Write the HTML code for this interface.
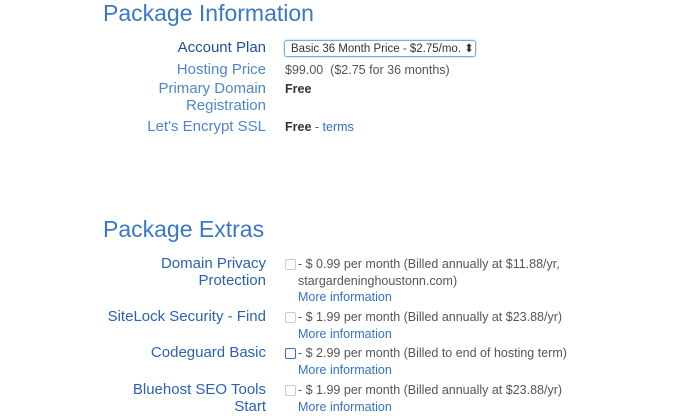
<!DOCTYPE html>
<html><head><style>
body{margin:0;width:700px;height:416px;background:#fff;font-family:"Liberation Sans",sans-serif;position:relative;overflow:hidden}
div{position:absolute;white-space:nowrap}
.h{left:103px;font-size:23px;color:#3a78c3}
.l{right:434px;font-size:15px;color:#2b62ae;text-align:right}
.lp{color:#4f86cc}
.v{left:285px;font-size:12.5px;color:#555}
.b{color:#333;font-weight:bold}
.a{color:#2f6fc0}
.m{left:298px;font-size:12.5px;color:#3573c4}
.cb{left:285px;width:9px;height:9px;border:1px solid #ccc;border-radius:2px}
.t{left:298px;font-size:12.5px;color:#555}
</style></head><body>
<div class="h" style="top:0px">Package Information</div>
<div class="l" style="top:39px;color:#1d4f96">Account Plan</div>
<div style="left:284px;top:40px;width:192px;height:17px;border:1px solid #7fa8dd;border-radius:3px;box-shadow:0 0 2px #9cc0ec;font-size:11.5px;color:#333;line-height:17px;padding-left:6px;box-sizing:border-box">Basic 36 Month Price - $2.75/mo. ⬍</div>
<div class="l lp" style="top:61px">Hosting Price</div>
<div class="v" style="top:63px">$99.00&nbsp; ($2.75 for 36 months)</div>
<div class="l lp" style="top:80px">Primary Domain</div>
<div class="v b" style="top:82px">Free</div>
<div class="l lp" style="top:97px">Registration</div>
<div class="l lp" style="top:118px">Let's Encrypt SSL</div>
<div class="v" style="top:120px"><span class="b">Free</span> - <span class="a">terms</span></div>

<div class="h" style="top:216px">Package Extras</div>
<div class="l" style="top:255px">Domain Privacy</div>
<div class="l" style="top:272px">Protection</div>
<div class="cb" style="top:259px"></div>
<div class="t" style="top:257px">- $ 0.99 per month (Billed annually at $11.88/yr,</div>
<div class="t" style="top:274px">stargardeninghoustonn.com)</div>
<div class="m" style="top:290px">More information</div>
<div class="l" style="top:308px">SiteLock Security - Find</div>
<div class="cb" style="top:312px"></div>
<div class="t" style="top:310px">- $ 1.99 per month (Billed annually at $23.88/yr)</div>
<div class="m" style="top:327px">More information</div>
<div class="l" style="top:344px">Codeguard Basic</div>
<div class="cb" style="top:348px;border-color:#3d6fc0"></div>
<div class="t" style="top:346px">- $ 2.99 per month (Billed to end of hosting term)</div>
<div class="m" style="top:363px">More information</div>
<div class="l" style="top:381px">Bluehost SEO Tools</div>
<div class="l" style="top:398px">Start</div>
<div class="cb" style="top:385px"></div>
<div class="t" style="top:383px">- $ 1.99 per month (Billed annually at $23.88/yr)</div>
<div class="m" style="top:400px">More information</div>
</body></html>
